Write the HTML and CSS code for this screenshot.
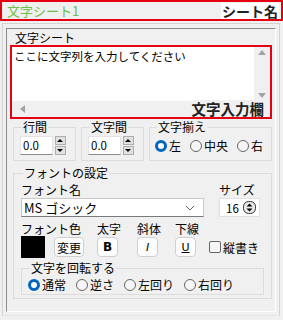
FILE: index.html
```html
<!doctype html>
<html lang="ja">
  <head>
    <meta charset="UTF-8" />
    <meta name="viewport" content="width=device-width, initial-scale=1.0" />
    <title>文字シート</title>
    <link rel="stylesheet" href="styles.css">
  </head>
  <body>
    <div class="header">
      <span class="sheet-title">文字シート1</span>
      <span class="tag">シート名</span>
    </div>

    <div class="frame">
      <div class="panel">
        <div class="section-label">文字シート</div>
        <div class="editor">
          <div class="editor-text">ここに文字列を入力してください</div>
          <div class="vscroll">
            <span class="arrow up"></span>
            <span class="arrow down"></span>
          </div>
          <div class="hscroll">
            <span class="arrow left"></span>
          </div>
          <span class="tag tag-editor">文字入力欄</span>
        </div>

        <div class="row">
          <fieldset class="group g-line">
            <legend>行間</legend>
            <div class="spin">
              <span class="spin-value">0.0</span>
              <span class="spin-btns"><i class="tri up"></i><i class="tri down"></i></span>
            </div>
          </fieldset>
          <fieldset class="group g-char">
            <legend>文字間</legend>
            <div class="spin">
              <span class="spin-value">0.0</span>
              <span class="spin-btns"><i class="tri up"></i><i class="tri down"></i></span>
            </div>
          </fieldset>
          <fieldset class="group g-align">
            <legend>文字揃え</legend>
            <div class="radios">
              <label class="radio checked"><span class="dot"></span>左</label>
              <label class="radio"><span class="dot"></span>中央</label>
              <label class="radio"><span class="dot"></span>右</label>
            </div>
          </fieldset>
        </div>

        <fieldset class="group font-group">
          <legend>フォントの設定</legend>
          <div class="font-row">
            <div class="field">
              <div class="field-label">フォント名</div>
              <div class="select">
                <span>MS ゴシック</span>
                <svg width="10" height="6" viewBox="0 0 10 6"><path d="M1 1 L5 5 L9 1" fill="none" stroke="#666" stroke-width="1"/></svg>
              </div>
            </div>
            <div class="field">
              <div class="field-label">サイズ</div>
              <div class="size-box">
                <span>16</span>
                <svg width="13" height="13" viewBox="0 0 13 13">
                  <rect x="0.5" y="0.5" width="12" height="12" rx="5" fill="#e8e8e8" stroke="#333"/>
                  <path d="M3.5 5.5 L6.5 2.5 L9.5 5.5 Z M3.5 7.5 L6.5 10.5 L9.5 7.5 Z" fill="#000"/>
                </svg>
              </div>
            </div>
          </div>

          <div class="style-grid">
            <div class="field-label">フォント色</div>
            <div class="field-label">太字</div>
            <div class="field-label">斜体</div>
            <div class="field-label">下線</div>
            <div></div>
            <div class="color-pick">
              <span class="swatch"></span>
              <span class="btn btn-change">変更</span>
            </div>
            <span class="btn btn-sq bold">B</span>
            <span class="btn btn-sq italic">I</span>
            <span class="btn btn-sq under">U</span>
            <label class="check"><span class="box"></span>縦書き</label>
          </div>

          <fieldset class="group rotate-group">
            <legend>文字を回転する</legend>
            <div class="radios">
              <label class="radio checked"><span class="dot"></span>通常</label>
              <label class="radio"><span class="dot"></span>逆さ</label>
              <label class="radio"><span class="dot"></span>左回り</label>
              <label class="radio"><span class="dot"></span>右回り</label>
            </div>
          </fieldset>
        </fieldset>
      </div>
    </div>
  </body>
</html>
```

FILE: styles.css
```css
body {
  margin: 0;
  width: 283px;
  height: 320px;
  background: #f0f0f0;
  font-family: "Noto Sans CJK JP", "Noto Sans", sans-serif;
  font-size: 12px;
  color: #000;
  overflow: hidden;
  white-space: nowrap;
}

.header {
  height: 21px;
  box-sizing: border-box;
  border: 2px solid #e50012;
  display: flex;
  align-items: center;
  justify-content: space-between;
  padding: 0 2px 0 5px;
}
.sheet-title {
  color: #6cc04a;
  font-size: 13px;
  line-height: 17px;
}
.tag {
  font-weight: bold;
  font-size: 14px;
  line-height: 16px;
  background: #fff;
  color: #222;
  padding: 0 1px;
}

.frame {
  margin: 2px 3px 0 2px;
  height: 293px;
  box-sizing: border-box;
  border: 1px solid #d4d4d4;
  border-bottom-color: #e6e6e6;
  padding: 4px 3px 3px 3px;
}
.panel {
  height: 100%;
  box-sizing: border-box;
  border: 1px solid #fff;
  border-top-color: #8a8a8a;
  border-left-color: #8a8a8a;
  padding: 2px 3px 0 3px;
}
.section-label {
  padding-left: 5px;
  line-height: 14px;
}

.editor {
  position: relative;
  height: 74px;
  box-sizing: border-box;
  border: 2px solid #e50012;
  display: grid;
  grid-template-columns: 1fr 16px;
  grid-template-rows: 1fr 16px;
  background: #fff;
}
.editor-text {
  padding: 2px 2px;
  font-size: 11.5px;
  line-height: 14px;
}
.vscroll {
  background: #f0f0f0;
  position: relative;
}
.hscroll {
  grid-column: 1 / 3;
  background: #f0f0f0;
  position: relative;
}
.arrow {
  position: absolute;
  width: 0;
  height: 0;
  border: 4px solid transparent;
}
.arrow.up {
  top: 3px;
  left: 4px;
  border-bottom: 5px solid #a3a3a3;
  border-top: 0;
}
.arrow.down {
  bottom: 3px;
  left: 4px;
  border-top: 5px solid #a3a3a3;
  border-bottom: 0;
}
.arrow.left {
  left: 8px;
  top: 4px;
  border-right: 5px solid #a3a3a3;
  border-left: 0;
}
.tag-editor {
  position: absolute;
  right: 5px;
  bottom: 0;
  font-size: 14.5px;
  line-height: 17px;
  background: #f0f0f0;
}

.group {
  margin: 0;
  padding: 0 6px 5px 6px;
  border: 1px solid #dcdcdc;
  min-width: 0;
}
.group legend {
  padding: 0 1px;
  margin-left: 2px;
  font-size: 12px;
  line-height: 14px;
}

.row {
  display: flex;
  gap: 5px;
  margin: 1px 0 0 3px;
}
.g-line, .g-char {
  width: 63px;
  box-sizing: border-box;
  padding-top: 2px;
}
.g-align {
  flex: 1;
  padding: 4px 4px 5px 5px;
}

.spin {
  display: flex;
  gap: 2px;
}
.spin-value {
  width: 33px;
  height: 19px;
  box-sizing: border-box;
  background: #fff;
  border: 1px solid #e3e3e3;
  border-bottom-color: #8a8a8a;
  padding-left: 2px;
  line-height: 17px;
  font-size: 11.5px;
}
.spin-btns {
  width: 11px;
  height: 19px;
  display: flex;
  flex-direction: column;
  gap: 1px;
}
.tri {
  flex: 1;
  background: #e1e1e1;
  border: 1px solid #adadad;
  position: relative;
}
.tri::after {
  content: "";
  position: absolute;
  left: 1px;
  top: 2px;
  border: 3px solid transparent;
}
.tri.up::after {
  border-bottom: 3px solid #000;
  border-top: 0;
}
.tri.down::after {
  border-top: 3px solid #000;
  border-bottom: 0;
}

.radios {
  display: flex;
  align-items: center;
  gap: 9px;
}
.radio {
  display: flex;
  align-items: center;
  gap: 2px;
  font-size: 12px;
  line-height: 16px;
}
.dot {
  width: 10px;
  height: 10px;
  border-radius: 50%;
  border: 1px solid #666;
  background: #f6f6f6;
}
.radio.checked .dot {
  width: 6px;
  height: 6px;
  border: 3px solid #0067c0;
  background: #fff;
}

.font-group {
  margin: 5px 0 0 3px;
  padding: 0 7px 3px 7px;
}
.font-row {
  display: flex;
  justify-content: space-between;
  margin-top: 2px;
}
.field-label {
  line-height: 15px;
}
.font-row .field-label {
  margin-bottom: 1px;
}
.select {
  width: 183px;
  height: 19px;
  box-sizing: border-box;
  background: #fff;
  border: 1px solid #c8c8c8;
  border-bottom-color: #7a7a7a;
  display: flex;
  align-items: center;
  justify-content: space-between;
  padding: 0 8px 0 2px;
  font-size: 13px;
}
.size-box {
  width: 41px;
  height: 19px;
  box-sizing: border-box;
  background: #fff;
  border: 1px solid #e0e0e0;
  display: flex;
  align-items: center;
  justify-content: space-between;
  padding: 0 3px 0 6px;
  font-size: 11.5px;
  margin-right: 4px;
}

.style-grid {
  display: grid;
  grid-template-columns: 76px 40px 38px 34px auto;
  align-items: center;
  margin-top: 4px;
}
.color-pick {
  display: flex;
  align-items: center;
  gap: 9px;
}
.swatch {
  width: 24px;
  height: 22px;
  background: #000;
}
.btn {
  height: 20px;
  box-sizing: border-box;
  border: 1px solid #cfcfcf;
  border-radius: 4px;
  background: #fdfdfd;
  display: flex;
  align-items: center;
  justify-content: center;
  font-size: 12px;
}
.btn-change {
  width: 30px;
}
.btn-sq {
  width: 21px;
  font-family: "DejaVu Sans", sans-serif;
}
.bold { font-weight: bold; font-size: 12px; }
.italic { font-style: italic; font-size: 11px; }
.under { text-decoration: underline; font-size: 11px; }

.check {
  display: flex;
  align-items: center;
  gap: 2px;
}
.box {
  width: 10px;
  height: 10px;
  border: 1px solid #666;
  border-radius: 2px;
  background: #f6f6f6;
}

.rotate-group {
  margin: 3px 0 0 0;
  padding: 3px 6px 2px 6px;
}
.rotate-group .radio {
  line-height: 14px;
}
.rotate-group .radios {
  gap: 10px;
}
```
